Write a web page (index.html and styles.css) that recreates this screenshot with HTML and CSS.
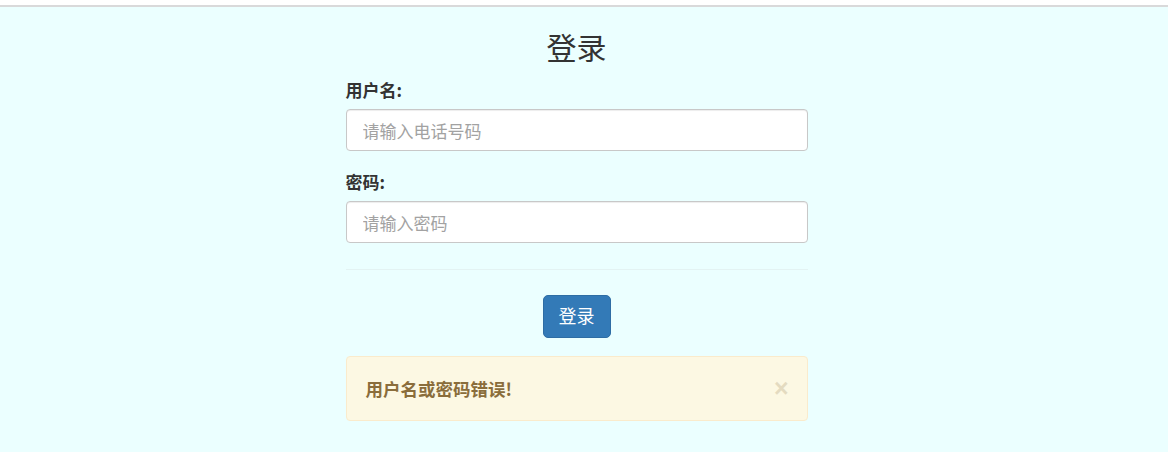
FILE: index.html
```html
<!DOCTYPE html>
<html lang="zh">
<head>
<meta charset="utf-8">
<title>登录</title>
<link rel="stylesheet" href="styles.css">
</head>
<body>
<div class="topbar"></div>
<main class="page">
  <div class="panel">
    <h2 class="title">登录</h2>
    <form class="form">
      <div class="group">
        <label class="label" for="user">用户名:</label>
        <input class="input" id="user" type="text" placeholder="请输入电话号码">
      </div>
      <div class="group">
        <label class="label" for="pwd">密码:</label>
        <input class="input" id="pwd" type="password" placeholder="请输入密码">
      </div>
      <hr class="rule">
      <div class="actions">
        <button class="btn" type="button">登录</button>
      </div>
      <div class="alert">
        <span class="alert-text">用户名或密码错误!</span>
        <span class="close">×</span>
      </div>
    </form>
  </div>
</main>
</body>
</html>
```
FILE: styles.css
```css
html, body {
  margin: 0;
  padding: 0;
}
body {
  background: #ebffff;
  font-family: "Liberation Sans", "Noto Sans CJK SC", sans-serif;
  color: #333;
  height: 452px;
  overflow: hidden;
}
.topbar {
  height: 5px;
  background: #fff;
  border-bottom: 2px solid #d9d9da;
}
.page {
  display: flex;
  justify-content: center;
  padding-right: 15px;
}
.panel {
  width: 462px;
}
.title {
  margin: 23px 0 0;
  font-size: 30px;
  line-height: 33px;
  font-weight: 400;
  text-align: center;
  color: #333;
  font-family: "Noto Sans CJK SC", sans-serif;
}
.form {
  margin: 0;
}
.group {
  display: flex;
  flex-direction: column;
}
.group:first-child {
  margin-top: 15px;
}
.group + .group {
  margin-top: 19px;
}
.label {
  font-size: 17px;
  line-height: 24px;
  font-weight: 700;
  margin-bottom: 7px;
  color: #333;
  font-family: "Noto Sans CJK SC", sans-serif;
}
.input {
  box-sizing: border-box;
  height: 42px;
  width: 100%;
  padding: 0 16px;
  font-size: 17px;
  font-family: "Noto Sans CJK SC", sans-serif;
  border: 1px solid #c8c8c8;
  border-radius: 4px;
  background: #fff;
  box-shadow: inset 0 1px 1px rgba(0,0,0,.075);
  color: #555;
  outline: none;
}
.input::placeholder {
  color: #a2a2a2;
}
.rule {
  margin: 26px 0 0;
  border: 0;
  border-top: 1px solid #e3f3f3;
  height: 0;
}
.actions {
  display: flex;
  justify-content: center;
  margin-top: 25px;
}
.btn {
  box-sizing: border-box;
  width: 68px;
  height: 43px;
  padding: 0 0 3px;
  background: #337ab7;
  border: 1px solid #2e6da4;
  border-radius: 5px;
  color: #fff;
  font-size: 18px;
  font-family: "Noto Sans CJK SC", sans-serif;
  cursor: pointer;
}
.alert {
  box-sizing: border-box;
  margin-top: 18px;
  height: 65px;
  display: flex;
  align-items: center;
  justify-content: space-between;
  padding: 0 18px 0 19px;
  background: #fcf8e3;
  border: 1px solid #faebcc;
  border-radius: 4px;
  color: #8a6d3b;
}
.alert-text {
  font-size: 17.5px;
  font-weight: 700;
  font-family: "Noto Sans CJK SC", sans-serif;
}
.close {
  font-size: 25px;
  font-weight: 700;
  line-height: 1;
  color: #8a6d3b;
  opacity: .2;
  font-family: "Liberation Sans", sans-serif;
}
```
